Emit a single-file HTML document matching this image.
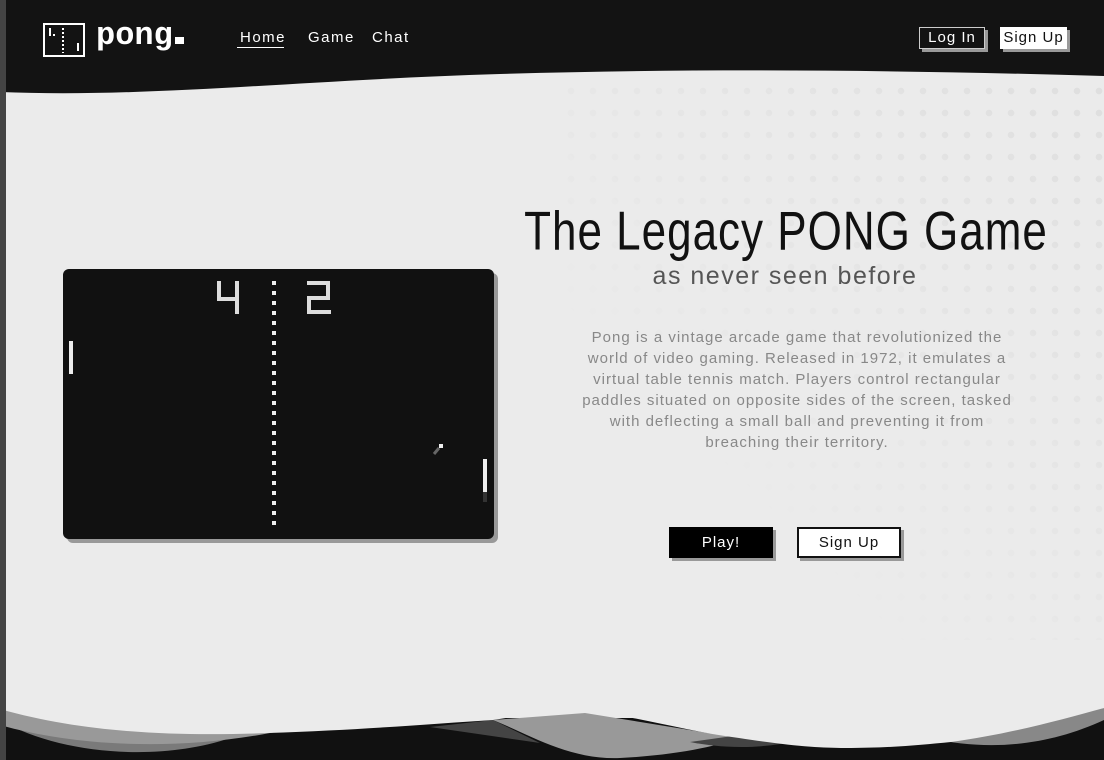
<!DOCTYPE html>
<html><head><meta charset="utf-8"><style>
*{margin:0;padding:0;box-sizing:border-box}
body{width:1104px;height:760px;overflow:hidden;background:#ebebeb;position:relative;font-family:"Liberation Sans",sans-serif}
.strip{position:absolute;left:0;top:0;width:6px;height:760px;background:#444;z-index:5}
.abs{position:absolute}
.nav a{position:absolute;top:29px;color:#fff;font-size:15px;letter-spacing:1.5px;text-decoration:none}
.btn{position:absolute;font-size:15px;text-align:center;letter-spacing:1px}
.dots{position:absolute;left:560px;top:80px;width:544px;height:560px;
background-image:radial-gradient(circle,#dedede 3px,transparent 3.5px);background-size:22px 22px;
-webkit-mask-image:linear-gradient(225deg,#000 0%,rgba(0,0,0,.4) 40%,transparent 70%);mask-image:linear-gradient(225deg,#000 0%,rgba(0,0,0,.4) 40%,transparent 70%)}
</style></head><body>
<div class="strip"></div>
<div class="dots"></div>
<svg class="abs" style="left:0;top:0" width="1104" height="110">
<path d="M0 0H1104V76C900 70 700 68 500 74C300 80 150 98 0 92Z" fill="#131313"/>
</svg>
<svg class="abs" style="left:43px;top:23px" width="42" height="34">
<rect x="1" y="1" width="40" height="32" fill="none" stroke="#fff" stroke-width="2"/>
<rect x="6" y="5" width="2" height="8" fill="#fff"/><rect x="10" y="11" width="2" height="2" fill="#fff"/>
<path d="M20 5V30" stroke="#fff" stroke-width="2" stroke-dasharray="2 2"/>
<rect x="34" y="20" width="2" height="8" fill="#fff"/>
</svg>
<div class="abs" style="left:96px;top:17px;color:#fff;font-family:'Liberation Mono',monospace;font-weight:bold;font-size:32px;letter-spacing:0px">pong<span style="display:inline-block;width:9px;height:7px;background:#fff;margin-left:2px"></span></div>
<div class="nav">
<a style="left:240px">Home</a><div class="abs" style="left:237px;top:47px;width:47px;height:1px;background:#fff"></div>
<a style="left:308px">Game</a><a style="left:372px">Chat</a>
</div>
<div class="btn" style="left:922px;top:30px;width:66px;height:22px;background:#999"></div>
<div class="btn" style="left:919px;top:27px;width:66px;height:22px;background:#131313;border:1px solid #ccc;color:#fff;line-height:20px">Log In</div>
<div class="btn" style="left:1003px;top:30px;width:67px;height:22px;background:#999"></div>
<div class="btn" style="left:1000px;top:27px;width:67px;height:22px;background:#fff;color:#111;line-height:22px">Sign Up</div>

<div class="abs" style="left:67px;top:273px;width:431px;height:270px;background:#999;border-radius:6px"></div>
<svg class="abs" style="left:63px;top:269px" width="431" height="270">
<rect width="431" height="270" rx="6" fill="#111"/>
<path d="M211 12V262" stroke="#eee" stroke-width="4" stroke-dasharray="4 6"/>
<path d="M156 12V30H174M174 12V45" stroke="#ddd" stroke-width="4" fill="none"/>
<path d="M244 14H265V29H246V43H268" stroke="#ddd" stroke-width="4" fill="none"/>
<rect x="6" y="72" width="4" height="33" fill="#eee"/>
<rect x="420" y="190" width="4" height="33" fill="#eee"/>
<rect x="420" y="223" width="4" height="10" fill="#555" opacity=".5"/>
<rect x="376" y="175" width="4" height="4" fill="#eee"/>
<path d="M376 179L371 185" stroke="#666" stroke-width="3"/>
</svg>

<div class="abs" style="left:486px;top:207px;width:600px;text-align:center;font-size:44px;line-height:50px;color:#111;letter-spacing:1px;white-space:nowrap;transform:scaleY(1.25)">The Legacy PONG Game</div>
<div class="abs" style="left:500px;top:262px;width:570px;text-align:center;font-size:25px;color:#555;letter-spacing:1.5px;white-space:nowrap">as never seen before</div>
<div class="abs" style="left:576px;top:327px;width:442px;text-align:center;font-size:15px;line-height:21px;color:#888;letter-spacing:1px">Pong is a vintage arcade game that revolutionized the world of video gaming. Released in 1972, it emulates a virtual table tennis match. Players control rectangular paddles situated on opposite sides of the screen, tasked with deflecting a small ball and preventing it from breaching their territory.</div>

<div class="btn" style="left:672px;top:530px;width:104px;height:31px;background:#999"></div>
<div class="btn" style="left:669px;top:527px;width:104px;height:31px;background:#000;color:#fff;line-height:31px">Play!</div>
<div class="btn" style="left:800px;top:530px;width:104px;height:31px;background:#999"></div>
<div class="btn" style="left:797px;top:527px;width:104px;height:31px;background:#fff;border:2px solid #111;color:#111;line-height:27px">Sign Up</div>

<svg class="abs" style="left:0;top:690px" width="1104" height="70">
<rect y="28" width="1104" height="42" fill="#111"/>
<path d="M0 30C60 65 160 72 230 48C250 42 270 40 290 38L0 20Z" fill="#7a7a7a"/>
<path d="M0 19V35C70 55 170 62 270 43L290 40Z" fill="#999"/>
<path d="M430 37L540 53L493 30Z" fill="#444"/>
<path d="M493 30C530 45 570 70 620 68C680 65 720 55 739 48L585 23Z" fill="#999"/>
<path d="M690 52C720 58 760 60 800 50L740 45Z" fill="#444"/>
<path d="M930 48C990 62 1050 55 1104 30V18Z" fill="#888"/>
<path d="M0 0V19C90 45 190 46 268 43C360 40 430 34 493 30C530 24 560 20 600 23C640 27 690 42 739 48C790 56 820 58 845 58C890 58 920 55 951 52C1010 44 1060 30 1104 18V0Z" fill="#ebebeb"/>
</svg>
</body></html>
